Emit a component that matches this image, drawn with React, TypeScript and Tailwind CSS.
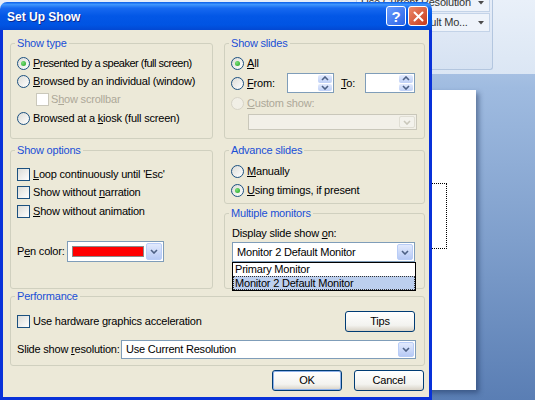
import React from "react"

function Acc({ children }: { children: React.ReactNode }) {
  return <span className="underline underline-offset-[1px]">{children}</span>
}

function Radio({ checked, disabled }: { checked?: boolean; disabled?: boolean }) {
  return (
    <span
      className={`flex h-[13px] w-[13px] shrink-0 items-center justify-center rounded-full border ${
        disabled ? "border-[#d6d3c6] bg-[#f1efe6]" : "border-[#1c5180] bg-[linear-gradient(135deg,#dcdcd7,#ffffff)]"
      }`}
    >
      {checked && <span className="h-[5px] w-[5px] rounded-full bg-[radial-gradient(circle_at_35%_35%,#7be07a,#21a121)]" />}
    </span>
  )
}

function Check({ disabled }: { disabled?: boolean }) {
  return (
    <span
      className={`h-[13px] w-[13px] shrink-0 border ${
        disabled ? "border-[#cac8bb] bg-white" : "border-[#1c5180] bg-[linear-gradient(135deg,#dcdcd7,#ffffff)]"
      }`}
    />
  )
}

function Chevron({ up, color = "#4d6185" }: { up?: boolean; color?: string }) {
  return (
    <svg width="8" height="5" viewBox="0 0 8 5">
      <path d={up ? "M1 4 L4 1 L7 4" : "M1 1 L4 4 L7 1"} stroke={color} strokeWidth="1.6" fill="none" />
    </svg>
  )
}

function DropBtn({ disabled }: { disabled?: boolean }) {
  return (
    <span
      className={`flex w-[16px] shrink-0 items-center justify-center rounded-[2px] border ${
        disabled ? "border-[#e0ded4] bg-[#f3f2ec]" : "border-[#b9cdf7] bg-[linear-gradient(to_bottom,#e2eafd,#b7caf5)]"
      }`}
    >
      <Chevron color={disabled ? "#c9c7ba" : "#4d6185"} />
    </span>
  )
}

function Spinner({ className }: { className: string }) {
  return (
    <div className={`flex h-[20px] border border-[#7f9db9] bg-white p-[1px] ${className}`}>
      <div className="flex-1" />
      <div className="flex w-[14px] flex-col gap-[1px]">
        <span className="flex flex-1 items-center justify-center rounded-[2px] bg-[linear-gradient(to_bottom,#e2eafd,#bfd0f6)]">
          <Chevron up />
        </span>
        <span className="flex flex-1 items-center justify-center rounded-[2px] bg-[linear-gradient(to_bottom,#e2eafd,#bfd0f6)]">
          <Chevron />
        </span>
      </div>
    </div>
  )
}

function XpButton({ children, primary }: { children: React.ReactNode; primary?: boolean }) {
  return (
    <button
      className={`flex h-[21px] w-[70px] items-center justify-center rounded-[3px] border border-[#003c74] bg-[linear-gradient(to_bottom,#ffffff,#f3f3ef_70%,#d8d2c6)] ${
        primary ? "shadow-[inset_0_0_0_1px_#8fb2ea]" : ""
      }`}
    >
      {children}
    </button>
  )
}

function Group({ label, className, children }: { label: string; className: string; children: React.ReactNode }) {
  return (
    <fieldset className={`rounded-[3px] border border-[#d0d0bf] px-[6px] ${className}`}>
      <legend className="ml-[-2px] px-[2px] leading-[13px] text-[#1a4fd6]">{label}</legend>
      {children}
    </fieldset>
  )
}

function RibbonCombo({ text }: { text: string }) {
  return (
    <div className="flex h-[19px] items-center border border-[#c3d3e8] bg-[#eef3fa] pl-[4px] pr-[5px] text-[#333]">
      <span className="flex-1">{text}</span>
      <svg width="6" height="4" viewBox="0 0 6 4">
        <path d="M0 0 H6 L3 3.5 Z" fill="#4c4c4c" />
      </svg>
    </div>
  )
}

function Backdrop() {
  return (
    <>
      <div className="flex h-[74px] bg-[linear-gradient(to_bottom,#e9f0f9,#dbe6f4)]">
        <div className="h-[70px] w-[493px] rounded-br-[3px] border-r border-b border-[#b3c6df] bg-[linear-gradient(to_bottom,#e6edf8,#d6e2f2)]">
          <div className="ml-[356px] mt-[-7px] flex w-[134px] flex-col gap-[1px]">
            <RibbonCombo text="Use Current Resolution" />
            <RibbonCombo text="Monitor 2 Default Mo..." />
          </div>
        </div>
      </div>
      <div className="flex pl-[60px] pt-[16px]">
        <div className="h-[300px] w-[416px] bg-white pt-[93px] pl-[240px] shadow-[3px_3px_5px_rgba(20,40,80,0.45)]">
          <div className="h-[66px] w-[147px] border border-dotted border-black" />
        </div>
      </div>
    </>
  )
}

function Dialog() {
  return (
    <div className="absolute left-0 top-[2px] flex h-[398px] w-[432px] flex-col">
      {/* Title bar */}
      <div className="flex h-[28px] items-center rounded-t-[7px] bg-[linear-gradient(to_bottom,#0a5ee8_0%,#3e95fd_9%,#1769f0_22%,#0357e6_50%,#0054e3_82%,#0248d2_100%)] pl-[7px] pr-[4px]">
        <span className="pt-[2px] text-[12px] font-bold tracking-normal text-white [text-shadow:1px_1px_0_#0b2a94]">Set Up Show</span>
        <div className="ml-auto flex gap-[2px]">
          <span className="flex h-[20px] w-[20px] items-center justify-center rounded-[3px] border border-white bg-[linear-gradient(135deg,#6a9dff,#2a63e6)] text-[15px] font-bold leading-none text-white">
            ?
          </span>
          <span className="flex h-[20px] w-[20px] items-center justify-center rounded-[3px] border border-white bg-[linear-gradient(135deg,#ec8a6b,#c7391b)]">
            <svg width="11" height="11" viewBox="0 0 11 11">
              <path d="M1.5 1.5 L9.5 9.5 M9.5 1.5 L1.5 9.5" stroke="white" strokeWidth="2" strokeLinecap="round" />
            </svg>
          </span>
        </div>
      </div>

      {/* Client area */}
      <div className="flex flex-1 flex-col border-x-[3px] border-b-[3px] border-[#0831d9] bg-[#ece9d8] pl-[7px] pr-[4px] pt-[7px]">
        <div className="grid grid-cols-[203px_201px] gap-x-[11px]">
          <Group label="Show type" className="h-[102px]">
            <div className="flex flex-col pt-[4px]">
              <div className="flex h-[18px] items-center gap-[3px]">
                <Radio checked />
                <span className="tracking-[-0.5px]"><Acc>P</Acc>resented by a speaker (full screen)</span>
              </div>
              <div className="flex h-[19px] items-center gap-[3px]">
                <Radio />
                <span><Acc>B</Acc>rowsed by an individual (window)</span>
              </div>
              <div className="ml-[19px] flex h-[17px] items-center gap-[2px] text-[#aca899]">
                <Check disabled />
                <span>S<Acc>h</Acc>ow scrollbar</span>
              </div>
              <div className="flex h-[20px] items-center gap-[3px]">
                <Radio />
                <span>Browsed at a <Acc>k</Acc>iosk (full screen)</span>
              </div>
            </div>
          </Group>

          <Group label="Show slides" className="h-[102px]">
            <div className="flex flex-col pt-[4px]">
              <div className="flex h-[18px] items-center gap-[3px]">
                <Radio checked />
                <span><Acc>A</Acc>ll</span>
              </div>
              <div className="mt-[1px] flex h-[20px] items-center">
                <Radio />
                <span className="ml-[3px] w-[37px]"><Acc>F</Acc>rom:</span>
                <Spinner className="ml-[3px] w-[47px]" />
                <span className="ml-[7px] w-[24px]"><Acc>T</Acc>o:</span>
                <Spinner className="w-[50px]" />
              </div>
              <div className="mt-[1px] flex h-[18px] items-center gap-[3px] text-[#aca899]">
                <Radio disabled />
                <span><Acc>C</Acc>ustom show:</span>
              </div>
              <div className="ml-[17px] mt-[2px] flex h-[16px] w-[169px] border border-[#c9c7ba] bg-[#f2f0e8] p-[1px]">
                <div className="flex-1" />
                <DropBtn disabled />
              </div>
            </div>
          </Group>
        </div>

        <div className="mt-[5px] grid grid-cols-[203px_201px] gap-x-[11px]">
          <Group label="Show options" className="h-[145px]">
            <div className="flex flex-col pt-[8px]">
              <div className="flex h-[18px] items-center gap-[3px]">
                <Check />
                <span><Acc>L</Acc>oop continuously until 'Esc'</span>
              </div>
              <div className="flex h-[19px] items-center gap-[3px]">
                <Check />
                <span>Show without <Acc>n</Acc>arration</span>
              </div>
              <div className="flex h-[18px] items-center gap-[3px]">
                <Check />
                <span><Acc>S</Acc>how without animation</span>
              </div>
              <div className="mt-[21px] flex h-[21px] items-center">
                <span className="w-[50px]">P<Acc>e</Acc>n color:</span>
                <div className="flex h-[21px] w-[97px] border border-[#7f9db9] bg-white p-[1px]">
                  <div className="flex flex-1 pb-[3px] pl-[3px] pr-[2px] pt-[3px]">
                    <div className="flex-1 border border-[#8a8a8a] bg-[#ff0000]" />
                  </div>
                  <DropBtn />
                </div>
              </div>
            </div>
          </Group>

          <div className="flex flex-col">
            <Group label="Advance slides" className="h-[60px]">
              <div className="flex flex-col pt-[5px]">
                <div className="flex h-[18px] items-center gap-[3px]">
                  <Radio />
                  <span><Acc>M</Acc>anually</span>
                </div>
                <div className="mt-[1px] flex h-[18px] items-center gap-[3px]">
                  <Radio checked />
                  <span><Acc>U</Acc>sing timings, if present</span>
                </div>
              </div>
            </Group>
            <Group label="Multiple monitors" className="mt-[3px] h-[82px]">
              <div className="flex flex-col pt-[6px]">
                <div className="flex h-[14px] items-center pl-[1px]">
                  <span>Display slide show <Acc>o</Acc>n:</span>
                </div>
                <div className="relative ml-[1px] mt-[2px] w-[183px]">
                  <div className="flex h-[20px] border border-[#7f9db9] bg-white p-[1px]">
                    <span className="flex flex-1 items-center pl-[3px]">Monitor 2 Default Monitor</span>
                    <DropBtn />
                  </div>
                  <div className="absolute left-0 top-full z-10 w-[184px] border border-black bg-white">
                    <div className="flex h-[13px] items-center pl-[2px]">Primary Monitor</div>
                    <div className="flex h-[14px] items-center border border-dotted border-[#333] bg-[#bccfee] pl-[1px]">
                      Monitor 2 Default Monitor
                    </div>
                  </div>
                </div>
              </div>
            </Group>
          </div>
        </div>

        <Group label="Performance" className="mt-[1px] h-[76px]">
          <div className="flex flex-col pt-[8px]">
            <div className="flex h-[20px] items-center gap-[3px]">
              <Check />
              <span>Use hardware <Acc>g</Acc>raphics acceleration</span>
              <div className="ml-auto mr-[3px]">
                <XpButton>Tips</XpButton>
              </div>
            </div>
            <div className="mt-[9px] flex h-[19px] items-center">
              <span className="w-[104px]">Slide show <Acc>r</Acc>esolution:</span>
              <div className="flex h-[19px] w-[295px] border border-[#7f9db9] bg-white p-[1px]">
                <span className="flex flex-1 items-center pl-[3px]">Use Current Resolution</span>
                <DropBtn />
              </div>
            </div>
          </div>
        </Group>

        <div className="mt-[4px] flex justify-end gap-[12px] pr-[1px]">
          <XpButton primary>OK</XpButton>
          <XpButton>Cancel</XpButton>
        </div>
      </div>
    </div>
  )
}

export default function App() {
  return (
    <div className="relative h-[400px] w-[535px] overflow-hidden bg-[linear-gradient(to_bottom,#c9d9ee_0%,#9fbbe0_22%,#7f9fcc_60%,#5a7eb4_100%)] font-['Liberation_Sans',Arial,sans-serif] text-[11px] tracking-[-0.2px] text-black">
      <Backdrop />
      <Dialog />
    </div>
  )
}
